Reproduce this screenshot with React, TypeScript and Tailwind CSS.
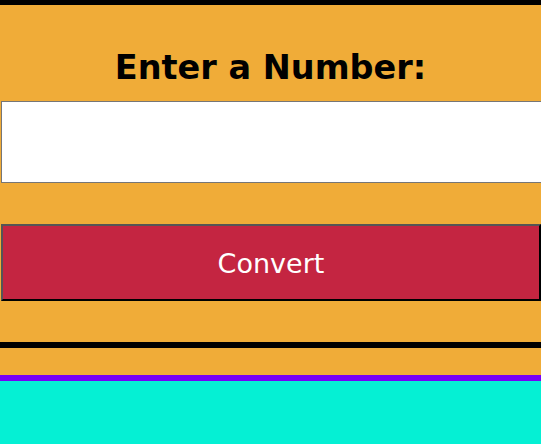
export default function App() {
  return (
    <div
      className="w-full min-h-[444px] overflow-hidden bg-[#05f0d4]"
      style={{ fontFamily: '"DejaVu Sans", sans-serif' }}
    >
      <div className="bg-[#f0ac38] border-t-[5px] border-b-[6px] border-black pt-[43px] pb-[41px]">
        <h1 className="text-center text-[33.5px] font-bold text-black leading-[40px]">
          Enter a Number:
        </h1>
        <input
          type="text"
          className="block mt-[13px] ml-px w-[560px] h-[82px] bg-white border border-[#767676] outline-none"
        />
        <button className="block mt-[41px] ml-px w-[540px] h-[77px] pt-[3px] bg-[#c42541] text-white text-[27px] leading-[32px] border-2 border-t-[#555] border-l-[#555] border-b-black border-r-black">
          Convert
        </button>
      </div>
      <div className="h-[27px] bg-[#f0ac38]" />
      <div className="h-[6px] bg-[#7800f5]" />
    </div>
  );
}
